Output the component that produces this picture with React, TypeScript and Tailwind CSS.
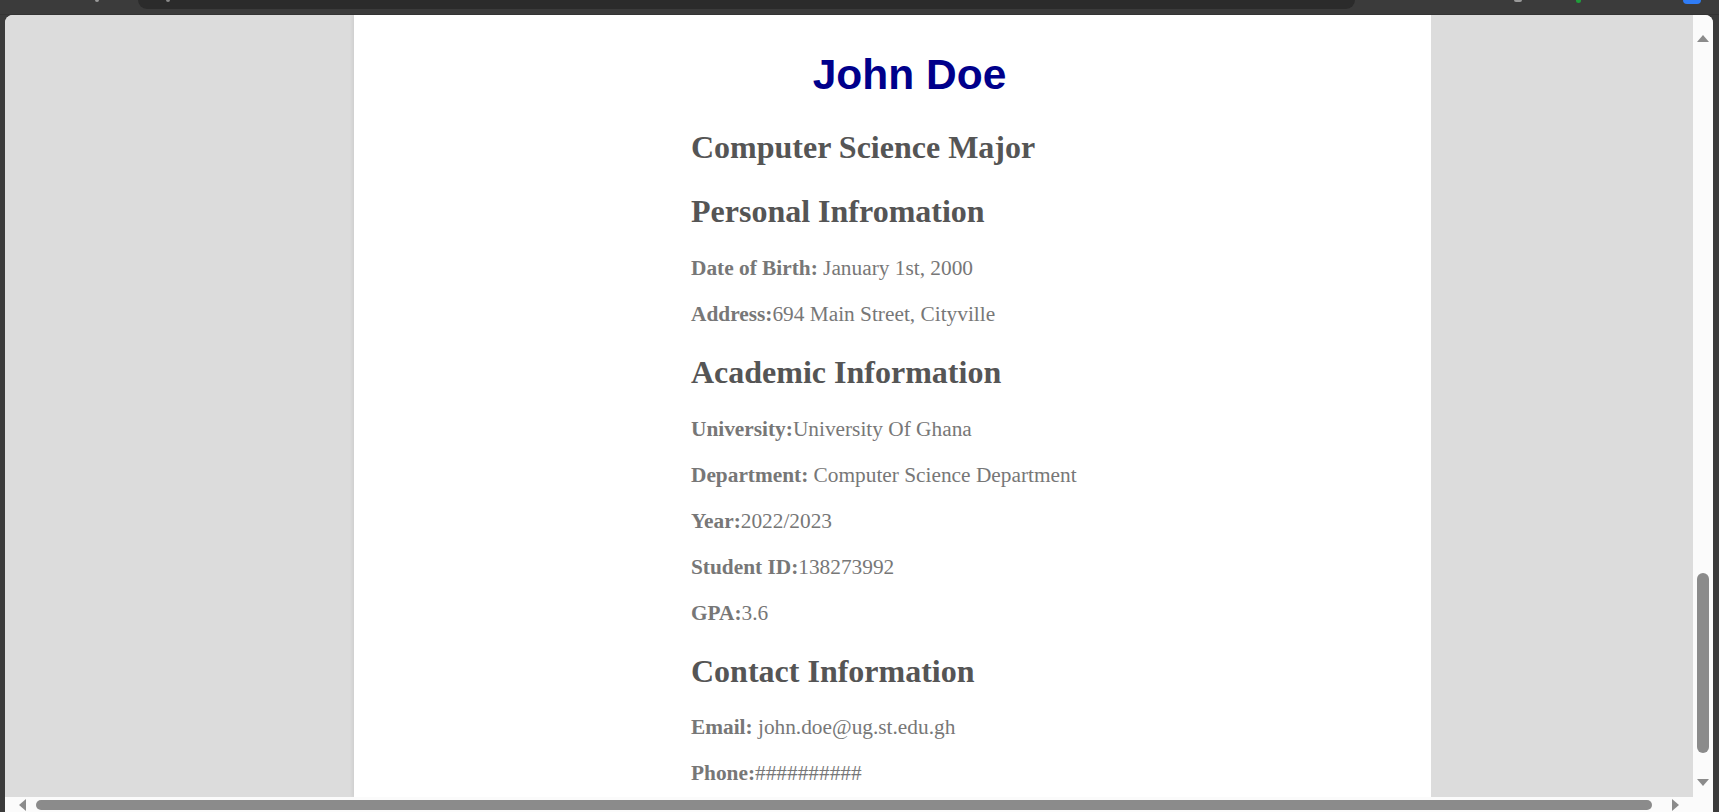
import React from 'react';

const serif = { fontFamily: '"Liberation Serif", "Times New Roman", serif' };

const Heading: React.FC<{ children: React.ReactNode; className?: string }> = ({ children, className = '' }) => (
  <h2 className={`text-[32px] leading-[36px] font-bold text-[#555555] ${className}`}>{children}</h2>
);

const Line: React.FC<{ label: string; value: string }> = ({ label, value }) => (
  <p className="text-[21.33px] leading-[24px] text-[#777777] mb-[22px] whitespace-nowrap">
    <b className="font-bold">{label}</b>
    {value}
  </p>
);

const Arrow: React.FC<{ dir: 'up' | 'down' | 'left' | 'right' }> = ({ dir }) => {
  const pts = {
    up: '0,7 6,0 12,7',
    down: '0,0 12,0 6,7',
    left: '7,0 7,12 0,6',
    right: '0,0 7,6 0,12',
  }[dir];
  const vert = dir === 'up' || dir === 'down';
  return (
    <svg width={vert ? 12 : 7} height={vert ? 7 : 12} viewBox={vert ? '0 0 12 7' : '0 0 7 12'}>
      <polygon points={pts} fill="#8b8b8b" />
    </svg>
  );
};

export default function App() {
  return (
    <div className="w-[1719px] h-[812px] bg-[#3b3b3b] flex flex-col overflow-hidden">
      {/* browser chrome strip */}
      <div className="relative h-[15px] shrink-0 border-b border-[#333333]">
        <div className="ml-[138px] w-[1217px] h-[9px] bg-[#2b2b2b] rounded-b-[11px]" />
        <span className="absolute left-[95px] top-0 w-[4px] h-[2px] rounded-b bg-[#9a9a9a]" />
        <span className="absolute left-[166px] top-0 w-[4px] h-[2px] rounded-b bg-[#8a8a8a]" />
        <span className="absolute left-[1514px] top-0 w-[8px] h-[2px] rounded-b bg-[#9a9a9a]" />
        <span className="absolute left-[1576px] top-0 w-[5px] h-[3px] rounded-b bg-[#1f9d3a]" />
        <span className="absolute left-[1683px] top-0 w-[18px] h-[4px] rounded-b-[4px] bg-[#2f7cf6]" />
      </div>

      {/* window */}
      <div className="flex-1 ml-[5px] mr-[6px] rounded-t-[8px] overflow-hidden flex flex-col bg-[#fbfbfb]">
        <div className="flex-1 flex min-h-0">
          <div className="flex-1 bg-[#dcdcdc] flex overflow-hidden">
            <div
              className="ml-[349px] w-[1077px] shrink-0 bg-white shadow-[-2px_0_3px_rgba(0,0,0,0.06)] pl-[337px] pt-[36px]"
              style={serif}
            >
              <div className="w-[437px] flex flex-col">
                <h1
                  className="text-[42.5px] leading-[48px] font-bold text-[#00008b] text-center mb-[30px]"
                  style={{ fontFamily: '"Liberation Sans", Arial, sans-serif' }}
                >
                  John Doe
                </h1>
                <Heading className="mb-[28px]">Computer Science Major</Heading>
                <Heading className="mb-[27px]">Personal Infromation</Heading>
                <Line label="Date of Birth:" value=" January 1st, 2000" />
                <Line label="Address:" value="694 Main Street, Cityville" />
                <Heading className="mt-[6px] mb-[27px]">Academic Information</Heading>
                <Line label="University:" value="University Of Ghana" />
                <Line label="Department:" value=" Computer Science Department" />
                <Line label="Year:" value="2022/2023" />
                <Line label="Student ID:" value="138273992" />
                <Line label="GPA:" value="3.6" />
                <Heading className="mt-[6px] mb-[26px]">Contact Information</Heading>
                <Line label="Email:" value=" john.doe@ug.st.edu.gh" />
                <Line label="Phone:" value="##########" />
              </div>
            </div>
          </div>

          {/* vertical scrollbar */}
          <div className="w-[20px] shrink-0 bg-[#fbfbfb] flex flex-col items-center">
            <div className="h-[27px] flex items-end justify-center">
              <Arrow dir="up" />
            </div>
            <div className="flex-1" />
            <div className="w-[12px] h-[180px] rounded-full bg-[#8b8b8b]" />
            <div className="h-[44px] pt-[26px] flex justify-center">
              <Arrow dir="down" />
            </div>
          </div>
        </div>

        {/* horizontal scrollbar */}
        <div className="h-[15px] shrink-0 bg-[#fbfbfb] flex items-center">
          <div className="w-[26px] flex justify-end pr-[5px]">
            <Arrow dir="left" />
          </div>
          <div className="ml-[5px] w-[1616px] h-[10px] rounded-full bg-[#8b8b8b]" />
          <div className="ml-[20px]">
            <Arrow dir="right" />
          </div>
        </div>
      </div>
    </div>
  );
}
